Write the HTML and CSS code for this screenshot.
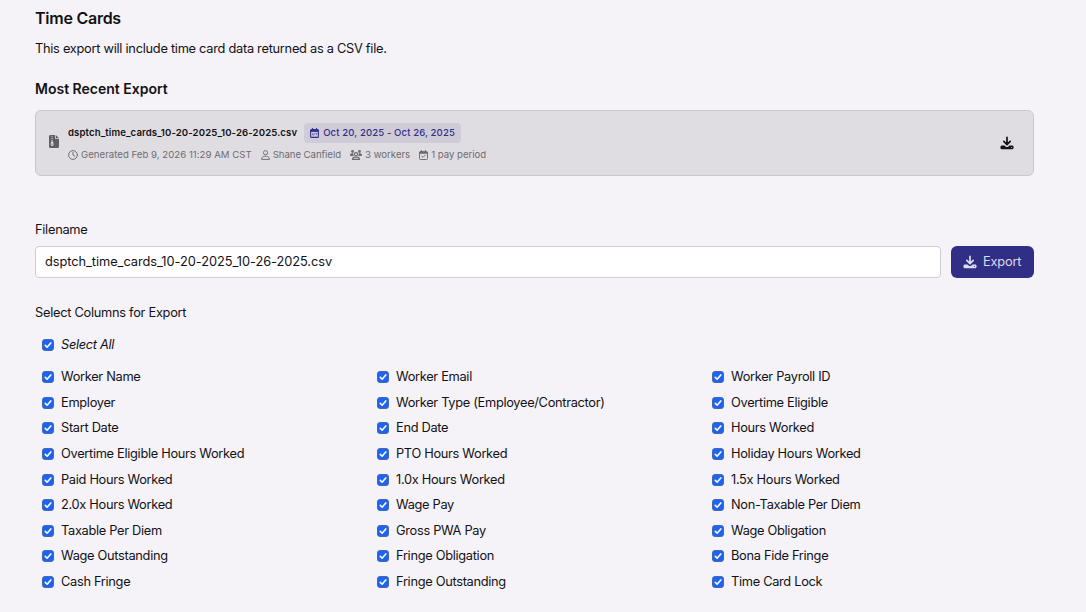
FILE: index.html
```html
<!DOCTYPE html>
<html lang="en">
<head>
<meta charset="utf-8">
<title>Time Cards</title>
<link rel="stylesheet" href="styles.css">
</head>
<body>
<svg class="defs" aria-hidden="true">
  <symbol id="download" viewBox="0 0 14 14">
    <path d="M7 1.300v7M3.800 5.400 7 8.600l3.200-3.200" fill="none" stroke="currentColor" stroke-width="1.700" stroke-linecap="round" stroke-linejoin="round"/>
    <path d="M2 9.500h2.500l1 1c.9.8 2.100.8 3 0l1-1H12c.9 0 1.600.6 1.600 1.500v.8c0 .9-.7 1.500-1.600 1.500H2c-.9 0-1.600-.6-1.600-1.500V11c0-.9.7-1.500 1.600-1.500zM11.400 10.900a.5.5 0 1 0 0 1 .5.5 0 0 0 0-1z" fill="currentColor" fill-rule="evenodd"/>
  </symbol>
  <symbol id="zip" viewBox="0 0 10 13">
    <path d="M1.500 0H6v3.200c0 .5.300.8.800.8H10v7.500c0 .9-.6 1.500-1.500 1.500h-7C.6 13 0 12.400 0 11.500v-10C0 .6.6 0 1.500 0zM6.800 0 10 3.200H6.800z" fill="currentColor"/>
    <path d="M2.300 1.700h1.500M2.300 3.500h1.500M2.300 5.300h1.500" stroke="#dfdde1" stroke-width=".7"/>
    <path d="M2.300 6.300h1.600l.7 2.700c.2 1-.5 1.900-1.500 1.900S1.400 10 1.600 9z" fill="#dfdde1"/>
    <path d="M2.500 9.200h1.200" stroke="currentColor" stroke-width=".9"/>
  </symbol>
  <symbol id="clock" viewBox="0 0 10 10">
    <g fill="none" stroke="currentColor" stroke-width=".95" stroke-linecap="round"><circle cx="5" cy="5" r="4.400"/><path d="M5 2.400V5l1.700 1.200"/></g>
  </symbol>
  <symbol id="person" viewBox="0 0 9 10">
    <g fill="none" stroke="currentColor" stroke-width=".95" stroke-linejoin="round"><circle cx="4.500" cy="2.700" r="2.100"/><path d="M.6 9.400c0-1.900 1.200-3.100 2.900-3.100h2c1.700 0 2.900 1.200 2.900 3.100z"/></g>
  </symbol>
  <symbol id="group" viewBox="0 0 12 10">
    <g fill="currentColor"><circle cx="2.500" cy="1.500" r="1.400"/><circle cx="9.500" cy="1.500" r="1.400"/><path d="M0 5.500c0-1.400.8-2.200 2-2.200h1.500c-.4 1-.2 1.800.3 2.600H.3zM12 5.500c0-1.400-.8-2.200-2-2.200H8.500c.4 1 .2 1.800-.3 2.600h3.500z"/></g>
    <g fill="none" stroke="currentColor" stroke-width="1.100"><circle cx="6" cy="4.200" r="1.600"/><path d="M2.600 9.400c0-1.500.9-2.300 2.200-2.300h2.400c1.300 0 2.200.8 2.200 2.300z"/></g>
  </symbol>
  <symbol id="check-calendar" viewBox="0 0 9 10">
    <g fill="none" stroke="currentColor" stroke-width=".95" stroke-linecap="round" stroke-linejoin="round"><rect x=".5" y="1.600" width="8" height="7.900" rx="1"/><path d="M2.500.5v1.600M6.500.5v1.600M.5 3h8M2.800 6.200 4 7.400l2.300-2.300"/></g>
    <path d="M.5 1.700h8v1.900h-8z" fill="currentColor"/>
  </symbol>
  <symbol id="calendar" viewBox="0 0 9 10">
    <g fill="none" stroke="currentColor" stroke-width="1.100" stroke-linecap="round"><rect x=".6" y="1.600" width="7.800" height="7.800" rx="1"/><path d="M2.500.5v1.600M6.500.5v1.600"/></g>
    <path d="M.5 1.700h8v2.200h-8z" fill="currentColor"/>
    <path d="M2.500 5.200v1.200c0 .5.300.8.800.8s.8-.3.800-.8V5.200M5.300 5.200h1.300v1.900" fill="none" stroke="currentColor" stroke-width=".6"/>
  </symbol>
  <symbol id="tick" viewBox="0 0 12 12">
    <path d="m3.300 6.400 1.800 1.800 3.700-4.300" fill="none" stroke="#fff" stroke-width="1.600" stroke-linecap="round" stroke-linejoin="round"/>
  </symbol>
</svg>
<main class="page">
  <h1 class="title">Time Cards</h1>
  <p class="intro">This export will include time card data returned as a CSV file.</p>
  <h2 class="subtitle">Most Recent Export</h2>
  <section class="recent">
    <svg class="file-icon"><use href="#zip"/></svg>
    <div class="details">
      <div class="file-row">
        <span class="file-name">dsptch_time_cards_10-20-2025_10-26-2025.csv</span>
        <span class="badge"><svg class="badge-icon"><use href="#calendar"/></svg><span class="badge-text">Oct 20, 2025 - Oct 26, 2025</span></span>
      </div>
      <div class="meta">
        <span class="meta-item generated"><svg class="icon-clock"><use href="#clock"/></svg>Generated Feb 9, 2026 11:29 AM CST</span>
        <span class="meta-item author"><svg class="icon-person"><use href="#person"/></svg>Shane Canfield</span>
        <span class="meta-item workers"><svg class="icon-group"><use href="#group"/></svg>3 workers</span>
        <span class="meta-item"><svg class="icon-person"><use href="#check-calendar"/></svg>1 pay period</span>
      </div>
    </div>
    <svg class="download-icon"><use href="#download"/></svg>
  </section>
  <label class="label" for="filename">Filename</label>
  <div class="form-row">
    <input class="filename" id="filename" value="dsptch_time_cards_10-20-2025_10-26-2025.csv">
    <button class="export"><svg class="export-icon"><use href="#download"/></svg><span>Export</span></button>
  </div>
  <p class="columns-label">Select Columns for Export</p>
  <div class="option select-all"><svg class="box"><use href="#tick"/></svg><span>Select All</span></div>
  <div class="columns">
    <div class="option"><svg class="box"><use href="#tick"/></svg><span>Worker Name</span></div>
    <div class="option"><svg class="box"><use href="#tick"/></svg><span>Worker Email</span></div>
    <div class="option"><svg class="box"><use href="#tick"/></svg><span>Worker Payroll ID</span></div>
    <div class="option"><svg class="box"><use href="#tick"/></svg><span>Employer</span></div>
    <div class="option"><svg class="box"><use href="#tick"/></svg><span>Worker Type (Employee/Contractor)</span></div>
    <div class="option"><svg class="box"><use href="#tick"/></svg><span>Overtime Eligible</span></div>
    <div class="option"><svg class="box"><use href="#tick"/></svg><span>Start Date</span></div>
    <div class="option"><svg class="box"><use href="#tick"/></svg><span>End Date</span></div>
    <div class="option"><svg class="box"><use href="#tick"/></svg><span>Hours Worked</span></div>
    <div class="option"><svg class="box"><use href="#tick"/></svg><span>Overtime Eligible Hours Worked</span></div>
    <div class="option"><svg class="box"><use href="#tick"/></svg><span>PTO Hours Worked</span></div>
    <div class="option"><svg class="box"><use href="#tick"/></svg><span>Holiday Hours Worked</span></div>
    <div class="option"><svg class="box"><use href="#tick"/></svg><span>Paid Hours Worked</span></div>
    <div class="option"><svg class="box"><use href="#tick"/></svg><span>1.0x Hours Worked</span></div>
    <div class="option"><svg class="box"><use href="#tick"/></svg><span>1.5x Hours Worked</span></div>
    <div class="option"><svg class="box"><use href="#tick"/></svg><span>2.0x Hours Worked</span></div>
    <div class="option"><svg class="box"><use href="#tick"/></svg><span>Wage Pay</span></div>
    <div class="option"><svg class="box"><use href="#tick"/></svg><span>Non-Taxable Per Diem</span></div>
    <div class="option"><svg class="box"><use href="#tick"/></svg><span>Taxable Per Diem</span></div>
    <div class="option"><svg class="box"><use href="#tick"/></svg><span>Gross PWA Pay</span></div>
    <div class="option"><svg class="box"><use href="#tick"/></svg><span>Wage Obligation</span></div>
    <div class="option"><svg class="box"><use href="#tick"/></svg><span>Wage Outstanding</span></div>
    <div class="option"><svg class="box"><use href="#tick"/></svg><span>Fringe Obligation</span></div>
    <div class="option"><svg class="box"><use href="#tick"/></svg><span>Bona Fide Fringe</span></div>
    <div class="option"><svg class="box"><use href="#tick"/></svg><span>Cash Fringe</span></div>
    <div class="option"><svg class="box"><use href="#tick"/></svg><span>Fringe Outstanding</span></div>
    <div class="option"><svg class="box"><use href="#tick"/></svg><span>Time Card Lock</span></div>
  </div>
</main>
</body>
</html>
```
FILE: styles.css
```css
* { box-sizing: border-box; }
body { margin: 0; background: #f5f3f7; color: #121116; font: 12.8px/20px Inter, "Liberation Sans", sans-serif; letter-spacing: -0.27px; overflow: hidden; }
svg { display: block; flex: none; }
.defs { display: none; }
.page { width: 999px; margin-left: 35px; padding-top: 8px; }
.title { margin: 0; font-size: 16px; line-height: 20px; font-weight: 600; letter-spacing: -0.25px; }
.intro { margin: 11px 0 0; line-height: 20px; }
.subtitle { margin: 20px 0 0; font-size: 14px; line-height: 20px; font-weight: 600; letter-spacing: 0; }
.recent { display: flex; align-items: center; height: 66px; margin-top: 11px; padding: 0 19px 0 13px; border: 1px solid #c9c7cc; border-radius: 6px; background: #dfdde1; }
.file-icon { width: 10px; height: 13px; margin: -3px 9px 0 0; color: #5f5e64; }
.details { flex: 1; display: flex; flex-direction: column; align-items: flex-start; margin-top: -1px; }
.file-row { display: flex; align-items: center; gap: 7px; }
.file-name { font-size: 9.6px; font-weight: 600; letter-spacing: 0.115px; }
.badge { display: flex; align-items: center; gap: 4px; height: 20px; padding: 0 6px; border-radius: 4px; background: #cfccd8; color: #33308a; font-size: 9.6px; font-weight: 500; letter-spacing: 0.1px; }
.badge-icon { width: 9px; height: 10px; }
.meta { display: flex; align-items: center; height: 14px; margin-top: 5px; gap: 9px; color: #6d6b71; font-size: 9.6px; line-height: 14px; letter-spacing: 0; }
.meta-item { display: flex; align-items: center; gap: 3px; white-space: nowrap; }
.generated { letter-spacing: 0.03px; }
.author { letter-spacing: -0.04px; }
.icon-clock { width: 10px; height: 10px; }
.icon-person { width: 9px; height: 10px; }
.icon-group { width: 12px; height: 10px; }
.download-icon { width: 14px; height: 14px; margin-top: -1px; }
.label { display: block; margin-top: 44px; line-height: 20px; }
.form-row { display: flex; gap: 10px; margin-top: 6px; }
.filename { flex: 1; height: 32px; padding: 0 9px 1px; border: 1px solid #d0ced3; border-radius: 4px; background: #fff; color: inherit; font: inherit; letter-spacing: -0.05px; outline: none; }
.export { display: flex; align-items: center; width: 83px; height: 32px; padding: 0 12px; gap: 6px; border: 0; border-radius: 6px; background: #312f85; color: #dcdbef; font: inherit; letter-spacing: -0.2px; }
.export-icon { width: 14px; height: 14px; }
.columns-label { margin: 25px 0 0; line-height: 20px; }
.option { display: flex; align-items: center; gap: 7px; height: 25.57px; padding-left: 7px; white-space: nowrap; letter-spacing: -0.3px; }
.box { width: 12px; height: 12px; border-radius: 4px; background: #1f64f0; box-shadow: inset 0 0 0 .5px #5d6a86; }
.select-all { margin-top: 9px; font-style: italic; }
.columns { display: grid; grid-template-columns: 335px 335px 1fr; margin-top: 7px; }
```
